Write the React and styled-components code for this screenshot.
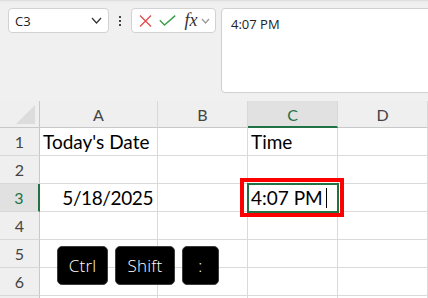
import React from "react";
import styled, { createGlobalStyle } from "styled-components";

const Global = createGlobalStyle`
  html, body { margin: 0; padding: 0; background: #f0f0f0; }
  #root { width: 428px; height: 298px; }
`;

const Screen = styled.div`
  position: relative;
  width: 428px;
  height: 298px;
  overflow: hidden;
  background: #f0f0f0;
  font-family: Lato, "Liberation Sans", sans-serif;
`;

const TopBar = styled.div`
  height: 101px;
  box-sizing: border-box;
  padding: 8px 0 0 8px;
  display: flex;
  align-items: flex-start;
  background: linear-gradient(#d6d6d6 0px, #e8e8e8 1px, #f0f0f0 3px);
`;

const Box = styled.div`
  box-sizing: border-box;
  height: 25px;
  background: #fff;
  border: 1px solid #d2d2d2;
  border-radius: 4px;
  display: flex;
  align-items: center;
`;

const NameBox = styled(Box)`
  width: 101px;
  padding: 0 6px 0 6px;
  justify-content: space-between;
  font-family: "Open Sans", "Noto Sans", sans-serif;
  font-size: 13px;
  color: #222;
`;

const Dots = styled.div`
  width: 22px;
  height: 25px;
  display: flex;
  flex-direction: column;
  align-items: center;
  justify-content: center;
  gap: 2px;
  span {
    width: 2px;
    height: 2px;
    background: #444;
  }
`;

const FxBox = styled(Box)`
  width: 85px;
  padding: 0 0 0 6px;
  gap: 0;
`;

const IconSlot = styled.div`
  width: ${(p) => p.$w}px;
  display: flex;
  align-items: center;
  justify-content: center;
`;

const Fx = styled.span`
  font-family: "Liberation Serif", serif;
  font-style: italic;
  font-size: 18px;
  color: #333;
  line-height: 1;
  margin-top: -2px;
`;

const FormulaBar = styled.div`
  box-sizing: border-box;
  flex: 1;
  margin-left: 5px;
  margin-right: -8px;
  height: 85px;
  background: #fff;
  border: 1px solid #d0d0d0;
  border-radius: 4px;
  padding: 6px 0 0 9px;
  font-family: "Open Sans", "Noto Sans", sans-serif;
  font-size: 13px;
  color: #222;
`;

const Sheet = styled.div`
  display: grid;
  grid-template-columns: 40px 118px 90px 90px 90px;
  grid-template-rows: 27px;
  grid-auto-rows: 28px;
  background: #fff;
`;

const Corner = styled.div`
  box-sizing: border-box;
  background: #efefef;
  border-right: 1px solid #c8c8c8;
  border-bottom: 1px solid #c8c8c8;
  position: relative;
  svg { position: absolute; right: 4px; bottom: 3px; }
`;

const ColHead = styled.div`
  box-sizing: border-box;
  background: ${(p) => (p.$sel ? "#e1e1e1" : "#efefef")};
  border-right: 1px solid #d8d8d8;
  border-bottom: ${(p) => (p.$sel ? "2px solid #217346" : "1px solid #c8c8c8")};
  display: flex;
  align-items: center;
  justify-content: center;
  padding-top: ${(p) => (p.$sel ? 1 : 0)}px;
  font-size: 16px;
  color: ${(p) => (p.$sel ? "#217346" : "#444")};
`;

const RowHead = styled.div`
  box-sizing: border-box;
  background: ${(p) => (p.$sel ? "#e1e1e1" : "#efefef")};
  border-right: ${(p) => (p.$sel ? "2px solid #217346" : "1px solid #c8c8c8")};
  border-bottom: 1px solid #d8d8d8;
  display: flex;
  align-items: center;
  justify-content: center;
  font-size: 16px;
  color: ${(p) => (p.$sel ? "#217346" : "#444")};
`;

const Cell = styled.div`
  box-sizing: border-box;
  border-right: 1px solid #dadada;
  border-bottom: 1px solid #dadada;
  display: flex;
  align-items: flex-end;
  justify-content: ${(p) => (p.$right ? "flex-end" : "flex-start")};
  padding: 0 4px 2px 3px;
  font-size: 19px;
  line-height: 22px;
  letter-spacing: ${(p) => (p.$right ? "-0.4px" : "0")};
  color: #000;
  white-space: nowrap;
  position: relative;
`;

const Caret = styled.span`
  display: inline-block;
  width: 1px;
  height: 20px;
  background: #000;
  margin-left: 3px;
  vertical-align: bottom;
  position: relative;
  top: -1px;
`;

const RedFrame = styled.div`
  position: absolute;
  left: 240px;
  top: 178px;
  width: 104px;
  height: 39px;
  box-sizing: border-box;
  border: 4px solid #ff0000;
  pointer-events: none;
`;

const GreenFrame = styled.div`
  position: absolute;
  left: 247px;
  top: 183px;
  width: 92px;
  height: 30px;
  box-sizing: border-box;
  border: 2px solid #217346;
  pointer-events: none;
`;

const Keys = styled.div`
  position: absolute;
  left: 57px;
  top: 246px;
  display: flex;
  gap: 7px;
`;

const Key = styled.div`
  box-sizing: border-box;
  width: ${(p) => p.$w}px;
  height: 39px;
  background: #000;
  border: 1px solid #3c3c3c;
  border-radius: 5px;
  color: #fff;
  display: flex;
  align-items: center;
  justify-content: center;
  font-family: "Open Sans", Lato, sans-serif;
  font-weight: 300;
  font-size: 17px;
  letter-spacing: 0.2px;
`;

const Chevron = ({ color = "#444", w = 9, h = 5 }) => (
  <svg width={w + 2} height={h + 2} viewBox={`-1 -1 ${w + 2} ${h + 2}`}>
    <polyline
      points={`0,0 ${w / 2},${h} ${w},0`}
      fill="none"
      stroke={color}
      strokeWidth="1.2"
    />
  </svg>
);

const cols = ["A", "B", "C", "D"];
const rows = [
  { n: 1, cells: ["Today's Date", "", "Time", ""] },
  { n: 2, cells: ["", "", "", ""] },
  { n: 3, cells: ["5/18/2025", "", "4:07 PM", ""], sel: true },
  { n: 4, cells: ["", "", "", ""] },
  { n: 5, cells: ["", "", "", ""] },
  { n: 6, cells: ["", "", "", ""] },
  { n: 7, cells: ["", "", "", ""], hideLabel: true },
];

export default function App() {
  return (
    <Screen>
      <Global />
      <TopBar>
        <NameBox>
          <span>C3</span>
          <Chevron color="#333" />
        </NameBox>
        <Dots>
          <span />
          <span />
          <span />
        </Dots>
        <FxBox>
          <IconSlot $w={14}>
            <svg width="13" height="12" viewBox="0 0 13 12">
              <path d="M1 0.5 L12 11.5 M12 0.5 L1 11.5" stroke="#e5484d" strokeWidth="1.3" fill="none" />
            </svg>
          </IconSlot>
          <IconSlot $w={30}>
            <svg width="17" height="11" viewBox="0 0 17 11">
              <polyline points="0.8,5.3 5.5,10 16.2,0.6" stroke="#3c9d4d" strokeWidth="1.4" fill="none" />
            </svg>
          </IconSlot>
          <IconSlot $w={18}>
            <Fx>fx</Fx>
          </IconSlot>
          <IconSlot $w={10}>
            <Chevron color="#9a9a9a" w={7} h={4} />
          </IconSlot>
        </FxBox>
        <FormulaBar>4:07 PM</FormulaBar>
      </TopBar>
      <Sheet>
        <Corner>
          <svg width="19" height="19" viewBox="0 0 19 19">
            <polygon points="19,0 19,19 0,19" fill="#dcdcdc" />
          </svg>
        </Corner>
        {cols.map((c) => (
          <ColHead key={c} $sel={c === "C"}>
            {c}
          </ColHead>
        ))}
        {rows.map((r) => (
          <React.Fragment key={r.n}>
            <RowHead $sel={r.sel}>{r.hideLabel ? "" : r.n}</RowHead>
            {r.cells.map((v, i) => (
              <Cell key={i} $right={r.n === 3 && i === 0}>
                {v}
                {r.n === 3 && i === 2 && <Caret />}
              </Cell>
            ))}
          </React.Fragment>
        ))}
      </Sheet>
      <GreenFrame />
      <RedFrame />
      <Keys>
        <Key $w={51}>Ctrl</Key>
        <Key $w={60}>Shift</Key>
        <Key $w={37}>:</Key>
      </Keys>
    </Screen>
  );
}
